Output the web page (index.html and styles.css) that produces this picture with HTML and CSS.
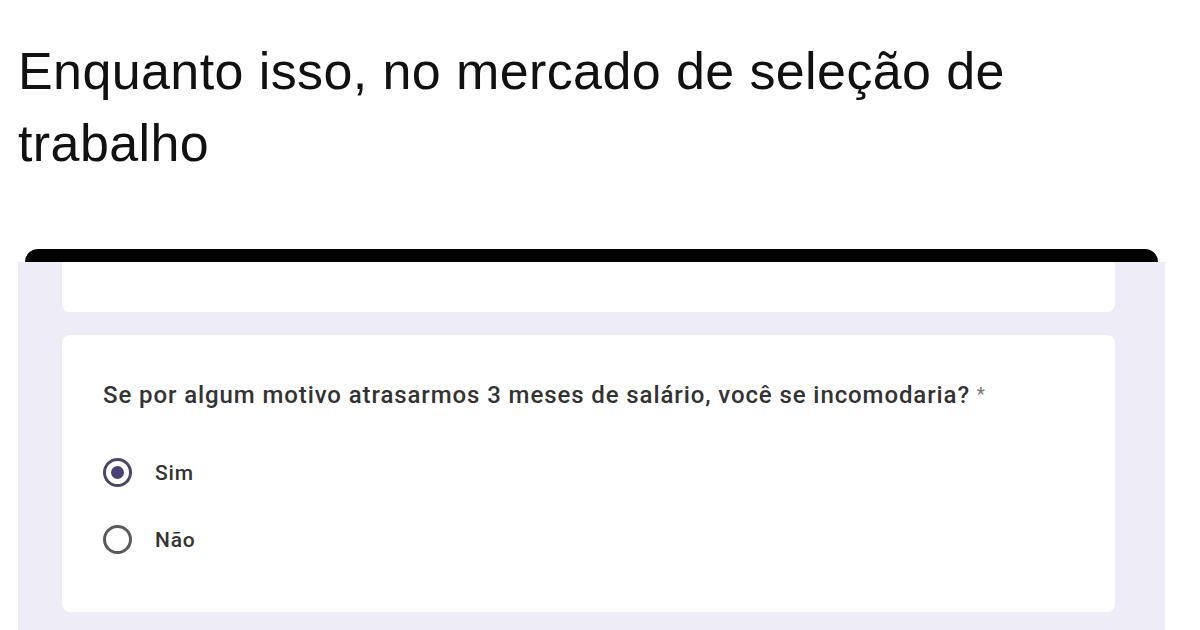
FILE: index.html
```html
<!DOCTYPE html>
<html lang="pt-BR">
<head>
    <meta charset="UTF-8">
    <meta name="viewport" content="width=device-width, initial-scale=1.0">
    <title>Enquanto isso</title>
    <link rel="stylesheet" href="styles.css">
</head>
<body>

    <!-- Post text -->
    <h1 class="post-text">Enquanto isso, no mercado de seleção de trabalho</h1>

    <!-- Screenshot of the form -->
    <div class="form-frame">
        <div class="frame-top"></div>
        <div class="frame-body">
            <div class="card card-header"></div>

            <div class="card card-question">
                <p class="question">Se por algum motivo atrasarmos 3 meses de salário, você se incomodaria? <span class="required">*</span></p>

                <label class="option">
                    <span class="radio checked"></span>
                    <span class="option-label">Sim</span>
                </label>
                <label class="option">
                    <span class="radio"></span>
                    <span class="option-label">Não</span>
                </label>
            </div>
        </div>
    </div>

</body>
</html>
```

FILE: styles.css
```css
/* Basic resets */
* {
    margin: 0;
    padding: 0;
    box-sizing: border-box;
}

body {
    background-color: #fff;
    color: #111;
    font-family: "Liberation Sans", Arial, sans-serif;
    overflow: hidden;
}

/* Post text */
.post-text {
    font-weight: normal;
    font-size: 52px;
    letter-spacing: 0.4px;
    line-height: 72px;
    padding: 35px 0 0 18px;
    width: 1080px;
    color: #111;
}

/* Form screenshot */
.form-frame {
    margin: 70px 0 0 18px;
    width: 1147px;
}

.frame-top {
    height: 13px;
    margin: 0 7px;
    background-color: #000;
    border-radius: 22px 22px 0 0;
}

.frame-body {
    background-color: #edecf7;
    padding: 0 50px 30px 44px;
}

.card {
    background-color: #fff;
}

.card-header {
    height: 50px;
    border-radius: 0 0 8px 8px;
    margin-bottom: 23px;
}

.card-question {
    height: 277px;
    border-radius: 8px;
    padding: 46px 0 0 41px;
    font-family: Roboto, "Liberation Sans", sans-serif;
}

.question {
    font-size: 24px;
    font-weight: 500;
    letter-spacing: 0.9px;
    line-height: 26px;
    color: #333;
    margin-bottom: 50px;
}

.required {
    color: #777;
    font-size: 18px;
    vertical-align: 3px;
}

.option {
    display: flex;
    align-items: center;
    gap: 23px;
    height: 29px;
    margin-bottom: 38px;
}

.radio {
    width: 29px;
    height: 29px;
    border: 3px solid #5a5a5e;
    border-radius: 50%;
    display: flex;
    align-items: center;
    justify-content: center;
}

.radio.checked {
    border-color: #4c4766;
}

.radio.checked::after {
    content: "";
    width: 13px;
    height: 13px;
    border-radius: 50%;
    background-color: #4a4275;
}

.option-label {
    font-size: 21px;
    font-weight: 500;
    letter-spacing: 0.8px;
    color: #333;
}
```
